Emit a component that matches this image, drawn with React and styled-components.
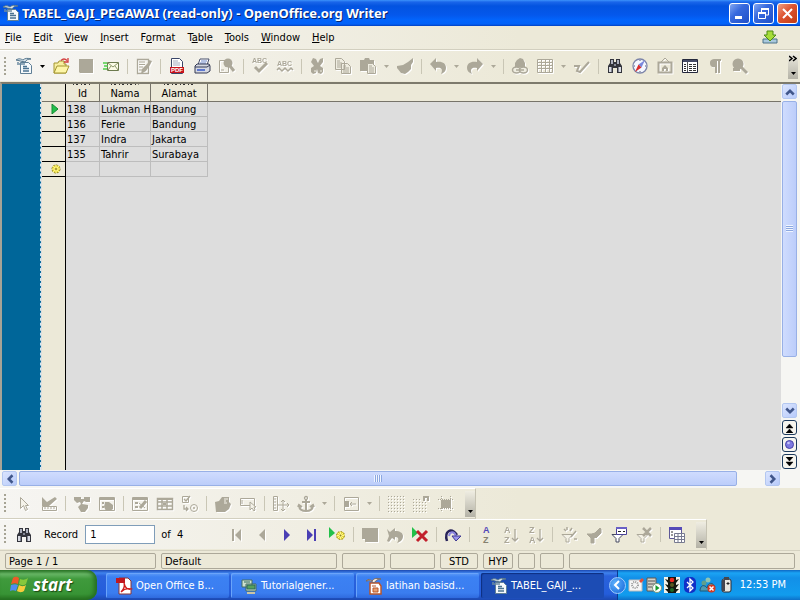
import React from "react";
import styled, { createGlobalStyle, css } from "styled-components";

const G = "#aca899";
const ui = `"DejaVu Sans Condensed", "DejaVu Sans", sans-serif`;

const Global = createGlobalStyle`
  * { box-sizing: border-box; }
  body { margin: 0; background: #ece9d8; font: 11px/14px ${ui}; color: #000; }
  button, input { font: inherit; color: inherit; }
  button { padding: 0; border: 0; background: none; }
  svg { display: block; flex: none; }
`;

/* ---------- icons, each on a 16 x 16 grid ---------- */
const binoculars = (
  <>
    <path d="M3 1h4v3h2V1h4v4l2 3v7h-5v-5H6v5H1V8l2-3z" fill="#33343c" />
    <path d="M4 2h2v4H4zM10 2h2v4h-2z" fill="#aeb2c0" />
    <path d="M2 9h2v5H2zM12 9h2v5h-2z" fill="#d8dae2" />
    <path d="M4 9h1v5H4zM11 9h1v5h-1zM7 6h2v2H7z" fill="#848896" />
  </>
);
const writerDoc = (
  <>
    <path d="M4.500 4.500h8l3 3v8h-11z" fill="#f7fafc" stroke="#5f7f96" />
    <path d="M0 2c3-2 5-1 7 0 2-2 5-2 8-1-3 0-5 1-6 3-3-1-6-1-9-2z" fill="#dfe9ef" stroke="#55758c" />
    <path d="M3 6h6M2 4v3" stroke="#6d8ca2" strokeWidth="1.500" />
    <path d="M7 8.500h4M7 10.500h6M7 13h6" stroke="#4b7391" strokeWidth="1.300" />
  </>
);
const sparkle = (x, y) => (
  <g transform={`translate(${x} ${y})`}>
    <circle r="4" fill="#e8da3c" stroke="#8f8220" strokeDasharray="2 1" />
    <path d="M-4 0h8M0-4v8M-3-3l6 6M-3 3l6-6" stroke="#fff68c" />
    <circle r="1" fill="#8f8220" />
  </g>
);
const funnel = <path d="M1 7h11L8 11v5H5v-5z" fill={G} stroke={G} />;
const funnelOpen = <path d="M1 7.500h11L8 11.500V15H5v-3.500z" fill="#f3f1e6" stroke={G} />;
const smallGrid = <path d="M.5 1.500h15v13H.5zM.5 4.500h15M.5 7.500h15M.5 10.500h15M4.500 1.500v13M8.500 1.500v13M12.500 1.500v13" fill="none" stroke={G} />;
const letter = (x, y, t, fill, size = 9) => (
  <text x={x} y={y} fill={fill} fontFamily="Liberation Sans, sans-serif" fontWeight="700" fontSize={size}>{t}</text>
);

const icons = {
  writer: writerDoc,
  open: (
    <>
      <path d="M1 15V5h4l1-2h5v3h2v9z" fill="#f7efa0" stroke="#a49631" />
      <path d="M1 15l3-7h12l-3 7z" fill="#fdf6a8" stroke="#a49631" />
      <path d="M8 2.500c2-2 4-2 6 0M15 0v4h-4" fill="none" stroke="#d23c3c" strokeWidth="1.300" />
    </>
  ),
  save: <path d="M1 1h14v14H2l-1-1z" fill={G} />,
  mail: (
    <>
      <path d="M4.500 4.500h11v8h-11z" fill="#fbfbe6" stroke="#6c7a4e" />
      <path d="M5 5l5 4 5-4M5 12l3-4M15 12l-3-4" fill="none" stroke="#8b9668" />
      <path d="M0 5h4M1 8h4M0 11h4" stroke="#4fd048" strokeWidth="1.300" />
    </>
  ),
  editDoc: (
    <>
      <path d="M1.500 1.500h11v14h-11z" fill="none" stroke={G} strokeWidth="1.300" />
      <path d="M3 4h6M3 6.500h6M3 9h4M3 12h3" stroke={G} />
      <path d="M13 2l3 1-2 4-4 6-5 3 1-5 6-6z" fill={G} />
    </>
  ),
  pdf: (
    <>
      <path d="M2.500.5h8l3 3v12h-11z" fill="#fff" stroke="#3a4668" />
      <path d="M4 3h5M4 5h7M4 7h7" stroke="#a3aac0" />
      <path d="M1 9h14v6H1z" fill="#c8141e" />
      {letter(2, 14, "PDF", "#fff", 6)}
    </>
  ),
  print: (
    <>
      <path d="M4 7l2-6h9l-2 6z" fill="#fff" stroke="#49506c" />
      <path d="M7 3h6M6 5h6" stroke="#6a85c8" />
      <path d="M1 8l2-2h12l1 2v5l-3 2H1z" fill="#d5d8e2" stroke="#343a54" />
      <path d="M1 9h12l3-2" stroke="#343a54" fill="none" />
      <path d="M3 11h8v2H3z" fill="#5d78d0" />
    </>
  ),
  preview: (
    <>
      <path d="M.5 2.500h9v12h-9z" fill="none" stroke={G} />
      <circle cx="9" cy="5" r="4.500" fill={G} /><path d="M11 8l4 5" stroke={G} strokeWidth="3" /><path d="M2 12h3" stroke={G} />
    </>
  ),
  spell: <>{letter(0, 5, "ABC", G, 7)}<path d="M3 9l4 4 8-8" stroke={G} strokeWidth="3" fill="none" /></>,
  autospell: <>{letter(0, 8, "ABC", G, 7)}<path d="M0 12l2-2 3 3 3-3 3 3 3-3 2 2" stroke={G} strokeWidth="1.500" fill="none" /></>,
  cut: (
    <>
      <path d="M3 0l3 1 2 4 2-4 3-1v4l-3 4 3 2v4l-2 2-3-1-1-4-1 4-3 1-2-2v-4l3-2-3-4z" fill={G} />
      <path d="M5 12v2M11 12v2" stroke="#f1efe3" />
    </>
  ),
  copy: (
    <>
      <path d="M.5.5h6l3 3v8h-9zM6.500 5.500h6l3 3v7h-9z" fill="#efede1" stroke={G} />
      <path d="M2 3h3M2 5h5M2 7h4M2 9h4M8 8h3M8 10h6M8 12h6M8 14h6" stroke={G} />
    </>
  ),
  paste: (
    <>
      <path d="M0 2h4l1-2h4l1 2h4v11H0z" fill={G} />
      <path d="M7.500 5.500h5l3 3v7h-8z" fill="#efede1" stroke={G} />
      <path d="M9 8h3M9 10h5M9 12h5M9 14h5" stroke={G} />
    </>
  ),
  brush: <path d="M16 0v4l-2 3v4l-3 3-3 2-4-1-4-5V8l6-1 5-3z" fill={G} />,
  undo: <path d="M0 6l6-6v4c6-1 10 1 10 6 0 3-2 5-5 6 2-4 1-7-5-6v3z" fill={G} />,
  redo: <path d="M16 6l-6-6v4C4 3 0 5 0 10c0 3 2 5 5 6-2-4-1-7 5-6v3z" fill={G} />,
  link: (
    <>
      <path d="M5 2l3-2 3 1 2 4v4H3V5z" fill={G} />
      <ellipse cx="4.500" cy="12" rx="4" ry="3" fill="#efede1" stroke={G} strokeWidth="1.500" />
      <ellipse cx="11.500" cy="12" rx="4" ry="3" fill="#efede1" stroke={G} strokeWidth="1.500" />
      <path d="M4 12h8" stroke={G} strokeWidth="1.500" />
    </>
  ),
  table: smallGrid,
  draw: <path d="M0 8h5l-2 5 3 1 9-10" stroke={G} strokeWidth="2" fill="none" />,
  find: binoculars,
  navigator: (
    <>
      <circle cx="8" cy="8" r="7" fill="#f4f7ff" stroke="#7c84a8" strokeWidth="1.300" />
      <path d="M13 2L9.500 9.500 6.500 6.500z" fill="#7a88dc" /><path d="M3 14l3.500-7.500 3 3z" fill="#d92a2a" />
      <path d="M8 2v1M8 13v1M2 8h1M13 8h1" stroke="#555b78" />
    </>
  ),
  gallery: (
    <>
      <path d="M4 4l4-4 4 4" fill="none" stroke={G} /><path d="M1.500 4.500h13v10h-13z" fill="none" stroke={G} strokeWidth="2" />
      <path d="M5 10l3-3 3 3v3H9v-2H7v2H5z" fill={G} />
    </>
  ),
  sources: (
    <>
      <path d="M.5 1.500h15v13H.5z" fill="#fff" stroke="#24283c" /><path d="M1 2h14v2H1z" fill="#454b66" />
      <path d="M5.500 4v10" stroke="#555" />
      <path d="M2 6.500h2M2 8.500h2M2 10.500h2M2 12.500h2M7 6.500h3M7 8.500h3M7 10.500h3M7 12.500h3M11 6.500h3M11 8.500h3M11 10.500h3M11 12.500h3" stroke="#333" />
    </>
  ),
  pilcrow: <path d="M14 1v2h-1v12h-2V3h-1v12H8V9C4 10 3 7 3 5c0-3 2-4 5-4z" fill={G} />,
  zoom: <><circle cx="6" cy="6" r="5.500" fill={G} /><path d="M9 9l6 6" stroke={G} strokeWidth="3" /><path d="M1 10h7v3H1z" fill={G} /></>,
  pointer: <path d="M4.500 1.500v11l3-3 2 5 2-1-2-4h3z" fill="#f5f3ea" stroke={G} />,
  design: <><path d="M1 1l5 5 8-5 2 2-8 7H1z" fill={G} /><path d="M1.500 10.500h14v4h-14zM4 11v2M7 11v2M10 11v2M13 11v2" fill="none" stroke={G} /></>,
  control: <path d="M0 1h7v2h3V1h6v5h-4l-2-1-2 3 6 1v3l-3 4H7l-3-5 3-3-1-2-3 1-3-3z" fill={G} />,
  form: <><path d="M.5 1.500h15v13H.5z" fill="none" stroke={G} /><path d="M1 1h14v3H1zM3 6h2v2H3zM3 10h2v2H3zM6 6h4l4 3v4l-3 2H7L5 11z" fill={G} /></>,
  formNav: <><path d="M.5 1.500h15v13H.5z" fill="none" stroke={G} /><path d="M1 1h14v3H1zM3 6h3v2H3zM3 10h3v2H3z" fill={G} /><path d="M14 5l-6 7" stroke={G} strokeWidth="3" /><path d="M7 7l6 5" stroke={G} /></>,
  addField: <><path d="M.5 2.500h15v11H.5zM1 6h14M1 10h14M5 3v11M10 3v11" fill="none" stroke={G} strokeWidth="1.500" /><path d="M1 2h14v2H1zM6 7h3v2H6z" fill={G} /></>,
  order: <><path d="M.5.5h6v6h-6z" fill="none" stroke={G} /><path d="M2 3l2 2 4-5M2 9v4h4M4 11l2 2-2 2" fill="none" stroke={G} strokeWidth="1.300" /><circle cx="12" cy="12" r="3.500" fill="none" stroke={G} /><circle cx="12" cy="12" r="1" fill={G} /></>,
  designOpen: <><path d="M0 6l4-1 3-4h7v5l2 2-2 5-4 3H1z" fill={G} /><path d="M9 3h4M9 5h2M9 7h3" stroke="#f4f2e8" /></>,
  autoFocus: <><path d="M.5 2.500h14v7H.5z" fill="none" stroke={G} /><path d="M2 4v4" stroke={G} /><path d="M10 6v8l2-2 2 3 1-1-1-3h2z" fill="#f4f2e8" stroke={G} /></>,
  position: <><path d="M.5.5h4v14h-4zM1 3h2M1 6h2M1 9h2M1 12h2M5 9h11M10 4v11M8 6l2-2 2 2M8 13l2 2 2-2M14 7l2 2-2 2" fill="none" stroke={G} /></>,
  anchor: <><circle cx="8" cy="2" r="1.500" fill="none" stroke={G} strokeWidth="1.300" /><path d="M8 4v11M4 6h8M1 9c0 4 3 6 7 6s7-2 7-6M0 11l1-2 3 2M16 11l-1-2-3 2" fill="none" stroke={G} strokeWidth="2" /></>,
  align: <><path d="M1.500 1.500h14v13h-14z" fill="none" stroke={G} /><path d="M1 5h5v6H1z" fill={G} /><path d="M7 8h6M9 6L7 8l2 2" stroke={G} fill="none" /></>,
  dots: <path d="M0 .5h16M0 3.500h16M0 6.500h16M0 9.500h16M0 12.500h16M0 15.500h16" stroke={G} strokeDasharray="1 2" />,
  snap: <><path d="M0 3.500h9M0 6.500h14M0 9.500h14M0 12.500h14M0 15.500h14" stroke={G} strokeDasharray="1 2" /><path d="M11 5V1h4v4" stroke={G} strokeWidth="2" fill="none" /></>,
  guides: <><path d="M3 4h10v8H3z" fill={G} /><path d="M0 3.500h16M0 12.500h16M3.500 0v16M12.500 0v16" stroke={G} strokeDasharray="1 1" /></>,
  first: <path d="M3 2h2v12H3zM12 2v12L6 8z" fill={G} />,
  prev: <path d="M11 2v12L5 8z" fill={G} />,
  next: <path d="M5 2v12l6-6z" fill="#4a3fb4" />,
  last: <path d="M3 2v12l6-6zM10 2h2v12h-2z" fill="#4a3fb4" />,
  newRec: <><path d="M0 0v11l6-5z" fill="#22c04a" />{sparkle(11.500, 8.500)}</>,
  saveRec: <path d="M0 1h16v14H3v-3H0z" fill={G} />,
  undoRec: <path d="M0 2l3 3 5-4v3c5 0 8 2 8 5 0 4-3 6-6 7 2-3 2-6-2-6v3L5 11l-3 4-2-1 2-5z" fill={G} />,
  delRec: <><path d="M0 0v11l6-5z" fill="#22c04a" /><path d="M5 4l10 10M15 4L5 14" stroke="#c2202c" strokeWidth="3" /></>,
  refresh: <><path d="M2 14C-1 4 6 0 12 8" fill="none" stroke="#28235a" strokeWidth="2.500" /><path d="M4 9C5 4 9 4 11 9" fill="none" stroke="#8c86e0" strokeWidth="2" /><path d="M7 9h9l-5 5z" fill="#9b95ec" stroke="#3e3892" /></>,
  sort: <>{letter(5, 6, "A", "#5147b8")}{letter(5, 16, "Z", "#85816f")}</>,
  sortAsc: <>{letter(1, 6, "A", G)}{letter(1, 16, "Z", G)}<path d="M12 2v12M9 11l3 3 3-3" stroke={G} fill="none" strokeWidth="1.300" /></>,
  sortDesc: <>{letter(1, 6, "Z", G)}{letter(1, 16, "A", G)}<path d="M12 2v12M9 11l3 3 3-3" stroke={G} fill="none" strokeWidth="1.300" /></>,
  autofilter: <>{funnelOpen}<path d="M3 2l2 2M6 0v3M11 1L9 4M10 10l5-6M13 12h3" stroke={G} strokeWidth="1.500" /></>,
  applyFilter: <>{funnel}<path d="M6 7l3-1 5-5 1 1v4l-5 5z" fill={G} stroke={G} /></>,
  defaultFilter: <><path d="M1 7.500h11L8 11.500V15H5v-3.500z" fill="#fff" stroke="#464a60" /><path d="M5.500.5h10v7h-10z" fill="#fff" stroke="#4a4298" /><path d="M5 0h11v2H5z" fill="#6960c6" /><path d="M7 4.500h3M12 4.500h2" stroke="#222" /></>,
  removeFilter: <>{funnelOpen}<path d="M7 1l8 8M15 1L7 9" stroke={G} strokeWidth="2.500" /></>,
  dataTable: <><path d="M.5.500h12v11H.5z" fill="#fff" stroke="#5d5896" /><path d="M0 0h13v3H0z" fill="#554bb8" /><path d="M2 5h2M2 8h2" stroke="#333" /><path d="M5.500 6.500h10v9h-10zM5 9.500h11M5 12.500h11M9 7v9M12.500 7v9" fill="#fff" stroke="#777a90" /></>,
  update: <><path d="M1 9h14v4H1z" fill="#a9c9dd" stroke="#4d7289" /><path d="M5 1h6v4h3l-6 6-6-6h3z" fill="#a6dc3a" stroke="#4c8a14" /></>,
  acrobat: <><path d="M3 0h9l3 3v13H3z" fill="#fff" stroke="#8c3434" /><path d="M0 0h9v5H0z" fill="#c01820" /><path d="M5 14c3-3 4-6 3-9 1 5 4 7 7 6-4-1-7 0-10 3z" fill="none" stroke="#d01c1c" strokeWidth="1.300" /></>,
  globe: <><path d="M1 2h10v7H1zM5 6h10v7H5z" fill="#cfe2cf" stroke="#456d62" /><path d="M3 4h6M6 7h8v4H6z" fill="#56a05c" stroke="#2c695c" /><path d="M6 15h8" stroke="#c9c4a5" strokeWidth="2" /></>,
  impress: <><path d="M4 5h9l2 3v8H4z" fill="#fff" stroke="#b9562a" strokeWidth="1.500" /><path d="M0 3c3-3 5-1 6 0 2-3 5-3 9-2-3 0-5 1-7 4C6 3 4 2 0 3z" fill="#f8ede2" stroke="#7d6a60" /><path d="M6 8h4M7 10h5v4H7z" fill="#e8a070" stroke="#b9562a" /></>,
  card: <><path d="M1 3h13v11H1z" fill="#f6f6f6" stroke="#bbb" /><circle cx="7" cy="8" r="3" fill="none" stroke="#999" strokeDasharray="1 1" strokeWidth="2" /><path d="M11 4l3-3 2 2-3 3z" fill="#e15038" /></>,
  server: <><path d="M1 1h9v13H1z" fill="#d5d2c8" stroke="#5c5a54" /><path d="M2 4h7M2 7h7M2 10h4" stroke="#555" /><circle cx="11" cy="11" r="4.500" fill="#fff" stroke="#7a9a7a" /><path d="M9.500 8v6l4-3z" fill="#169a2c" /></>,
  traffic: <><path d="M0 0h16v16H0z" fill="#f2f2ea" /><path d="M4 0h8v16H4zM1 2l3 1v3zM15 2l-3 1v3zM1 7l3 1v3zM15 7l-3 1v3zM1 12l3 0v3zM15 12l-3 0v3z" fill="#15180f" /><circle cx="8" cy="3" r="2.300" fill="#ee2a20" /><circle cx="8" cy="8" r="2" fill="#5a5a20" /><circle cx="8" cy="13" r="2" fill="#1e6a28" /></>,
  bluetooth: <><rect x="2" y="0" width="12" height="16" rx="5" fill="#1030c8" /><path d="M5 5l6 6-3 3V2l3 3-6 6" fill="none" stroke="#fff" strokeWidth="1.300" /></>,
  people: <><circle cx="8" cy="3" r="2.500" fill="#8fc6b4" /><circle cx="4" cy="6" r="2.500" fill="#5fa08e" /><path d="M0 13c1-6 5-5 7-2 1-6 6-6 8-1l-3 4H0z" fill="#4f9ab0" stroke="#1d5878" /><circle cx="11.500" cy="11.500" r="4" fill="#d8381e" /><path d="M9.500 9.500l4 4M13.500 9.500l-4 4" stroke="#fff" strokeWidth="1.500" /></>,
  battery: <><rect x="4" y="2" width="9" height="13" rx="2" fill="#e8e8e0" stroke="#2c2c34" /><path d="M6 0h5v3H6zM4 3h3v11H4z" fill="#44464e" /><path d="M8.500 6.500h3M10 5v3" stroke="#222" /></>,
};
const disabled = new Set("save editDoc preview spell autospell cut copy paste brush undo redo link table draw gallery pilcrow zoom pointer design control form formNav addField order designOpen autoFocus position anchor align dots snap guides first prev saveRec undoRec sortAsc sortDesc autofilter applyFilter removeFilter".split(" "));

const Svg = styled.svg`
  overflow: visible;
  ${(p) => p.$dim && css`filter: drop-shadow(1px 1px 0 #fff);`}
`;
const Icon = ({ name, size = 16 }) => (
  <Svg width={size} height={size} viewBox="0 0 16 16" $dim={disabled.has(name)} aria-hidden="true">
    {icons[name]}
  </Svg>
);
const Chevron = ({ dir }) => {
  const d = { up: "M1 6l3-3 3 3", down: "M1 2l3 3 3-3", left: "M6 1L3 4l3 3", right: "M2 1l3 3-3 3" }[dir];
  return <svg width="10" height="10" viewBox="0 0 8 8" aria-hidden="true"><path d={d} fill="none" stroke="#40568a" strokeWidth="2" /></svg>;
};

/* ---------- window frame ---------- */
const Page = styled.div`
  display: flex; flex-direction: column; height: 100vh; min-height: 400px; overflow: hidden;
  background: linear-gradient(90deg, #f6f5f2, #ece9d8 65%);
`;
const TitleBar = styled.header`
  display: flex; align-items: center; gap: 3px; height: 26px; padding: 0 2px 0 3px; flex: none;
  background: linear-gradient(#3c93fb 0, #1a66ea 2px, #0353e0 6px, #0458ec 15px, #0264fc 20px, #0262f8 24px, #0340c0 26px);
`;
const Title = styled.h1`
  flex: 1; margin: 0; font: 700 13px/18px "Noto Sans", sans-serif; color: #fff; white-space: nowrap;
  text-shadow: 1px 1px 0 #08246c;
`;
const FrameButton = styled.button`
  display: grid; place-items: center; width: 21px; height: 21px; border: 1px solid #fff; border-radius: 3px;
  background: ${(p) => (p.$close ? "linear-gradient(135deg, #f0a083, #dd5330 45%, #c13c14)" : "linear-gradient(135deg, #82a7f2, #3769de 40%, #1f4fc8)")};
`;
const FrameButtons = styled.div`display: flex; gap: 3px;`;
const MenuBar = styled.nav`
  display: flex; align-items: center; gap: 12px; height: 24px; padding: 1px 22px 0 5px; flex: none; border-bottom: 1px solid #d2cfbf;
`;
const MenuItem = styled.button`
  line-height: 16px;
  &:last-child { margin-left: auto; }
`;
const Toolbar = styled.div`
  display: flex; align-items: center; height: ${(p) => (p.$tall ? 32 : 31)}px; padding-right: ${(p) => (p.$tall ? 2 : 0)}px; flex: none;
  border-top: 1px solid #fff; border-bottom: 1px solid #d2cfbf;
  ${(p) => p.$fit && css`align-self: flex-start; border-right: 1px solid #c5c2b2;`}
  ${(p) => p.$last && css`border-bottom-color: #ece9d8;`}
`;
const Grip = styled.span`
  width: 2px; height: 19px; margin: 0 5px 0 4px; flex: none;
  background: repeating-linear-gradient(#a6a394 0 2px, transparent 2px 4px);
`;
const Tool = styled.button`
  display: grid; place-items: center; width: 25px; height: 25px; flex: none;
`;
const DropTool = styled(Tool)`width: 12px;`;
const Sep = styled.span`
  width: 1px; height: 15px; margin: 0 3px 0 4px; flex: none; background: #c9c6b5;
`;
const Overflow = styled.button`
  display: flex; flex-direction: column; align-items: center; justify-content: space-between;
  width: 10px; height: 26px; padding: 2px 0 4px; flex: none; align-self: center;
  margin-left: ${(p) => (p.$end ? "auto" : "7px")};
  background: linear-gradient(#efede2, #b4b2a6);
`;
const Down = ({ color = "#000" }) => <svg width="5" height="3" viewBox="0 0 5 3" aria-hidden="true"><path d="M0 0h5L2.500 3z" fill={color} /></svg>;

const Tools = ({ items }) =>
  items.map((it, i) => {
    if (it === "|") return <Sep key={i} />;
    if (it[0] === "v") return <DropTool key={i} aria-label="More options"><Down color={it === "v!" ? "#000" : G} /></DropTool>;
    return <Tool key={i} aria-label={it}><Icon name={it} /></Tool>;
  });

/* ---------- document area ---------- */
const Work = styled.main`
  display: flex; flex: 1; min-height: 0; border-top: 2px solid #7d7a6c; border-left: 2px solid #a6a396; background: #ddd;
`;
const Margin = styled.div`
  width: 39px; flex: none; background: #006699; border-right: 1px dashed #d4e6ee;
`;
const Sheet = styled.div`
  flex: 1; min-width: 0; margin-left: 1px;
  background: linear-gradient(90deg, #ece9d8 23px, #000 23px 24px, #ddd 24px);
`;
const Grid = styled.table`
  width: 100%; table-layout: fixed; border-collapse: separate; border-spacing: 0; line-height: 13px;
`;
const Head = styled.th`
  height: 18px; padding: 2px 0 0; font-weight: 400; background: #ece9d8; border-bottom: 1px solid #77746a;
  border-right: ${(p) => (p.$end ? "0" : p.$row ? "1px solid #000" : "1px solid #77746a")};
  ${(p) => p.$cut && css`background: #ece9d8 repeating-linear-gradient(90deg, #333 0 1px, transparent 1px 3px, #333 3px 5px, transparent 5px 8px) no-repeat center top / 55% 1px;`}
`;
const RowHead = styled.th`
  height: 15px; padding: 0 0 0 9px; border-right: 1px solid #000; border-bottom: 1px solid #000; background: #ece9d8;
`;
const Cell = styled.td`
  height: 15px; padding: 1px 0 0 1px; white-space: nowrap; border-right: 1px solid #bdbdbd; border-bottom: 1px solid #bdbdbd;
`;
const Col = styled.col`width: ${(p) => p.$w}px;`;

const ScrollV = styled.div`
  display: flex; flex-direction: column; gap: 2px; width: 19px; padding: 0 3px 1px 1px; flex: none; background: #f6f6f3;
`;
const ScrollH = styled.div`
  display: flex; gap: 2px; height: 18px; padding: 1px 20px 2px 2px; flex: none; background: #f6f6f3;
`;
const ScrollButton = styled.button`
  display: grid; place-items: center; width: 15px; height: 15px; flex: none; border: 1px solid #b3c7f0; border-radius: 2px;
  background: linear-gradient(135deg, #dbe5fe, #b7cafa);
`;
const Thumb = styled.div`
  display: grid; place-items: center; flex: ${(p) => p.$grow} 1 0; border: 1px solid #98b0e6; border-radius: 2px;
  background: linear-gradient(${(p) => (p.$v ? "90deg" : "180deg")}, #cfdcfe, #bccdfa);
  &::after {
    content: ""; width: ${(p) => (p.$v ? 7 : 8)}px; height: 7px;
    background: repeating-linear-gradient(${(p) => (p.$v ? "180deg" : "90deg")}, #f0f5ff 0 1px, #8ca8e0 1px 2px);
  }
`;
const Track = styled.div`flex: ${(p) => p.$grow} 1 0;`;
const NavButton = styled.button`
  display: grid; place-items: center; width: 15px; height: 15px; flex: none; border: 1px solid #1c3a5c; border-radius: 3px; background: #f6f5ee;
`;

/* ---------- record bar and status ---------- */
const RecordLabel = styled.label`margin: 0 7px 0 8px; white-space: nowrap;`;
const RecordInput = styled.input`
  width: 70px; height: 19px; padding: 0 4px; border: 1px solid #7f9db9; background: #fff; border-radius: 0;
`;
const Count = styled.span`width: 69px; padding-left: 6px; white-space: pre;`;
const Status = styled.footer`
  display: flex; gap: 5px; height: 20px; padding: 2px 5px 1px; flex: none; background: #ece9d8; border-top: 1px solid #d4d1c0;
`;
const StatusCell = styled.span`
  height: 16px; padding: 0 3px; border: 1px solid #aca899; border-radius: 2px; line-height: 16px; white-space: nowrap;
  ${(p) => (p.$w ? css`width: ${p.$w}px;` : css`flex: 1;`)}
  text-align: ${(p) => (p.$mid ? "center" : "left")};
`;

/* ---------- taskbar ---------- */
const Taskbar = styled.footer`
  display: flex; align-items: stretch; height: 30px; flex: none;
  background: linear-gradient(#1c48b0 0, #3f83ee 3px, #2a62dc 6px, #245ddb 24px, #1c48b0 30px);
`;
const Start = styled.button`
  display: flex; align-items: center; gap: 4px; width: 97px; padding-left: 10px; margin-right: 9px; border-radius: 0 10px 10px 0; flex: none;
  font: italic 700 17px/24px "Open Sans", sans-serif; color: #fff; text-shadow: 1px 1px 1px #1a4a12;
  background: linear-gradient(#2f7a2b 0, #67b565 4px, #3f9a3c 9px, #389435 24px, #25701f 30px);
  box-shadow: inset -3px 0 4px #256e22;
`;
const Tasks = styled.div`display: flex; gap: 2px; flex: 498 1 0; max-width: 498px; min-width: 0; padding: 3px 0 2px;`;
const Task = styled.button`
  display: flex; align-items: center; gap: 4px; flex: 1; min-width: 0; padding-left: 10px; border-radius: 2px; color: #fff; white-space: nowrap; overflow: hidden;
  background: ${(p) => (p.$active ? "#1c4cb4" : "linear-gradient(#5d9bf8, #3c81f3 4px, #3a7df0 20px, #2f6ade)")};
  box-shadow: ${(p) => (p.$active ? "inset 1px 1px 1px #0e2f80" : "inset 1px 1px 0 #6aa4fa")};
`;
const Tray = styled.div`
  display: flex; align-items: center; gap: 2px; margin-left: auto; padding-right: 14px; flex: none; color: #fff;
  background: linear-gradient(#0e68c4 0, #1ba4f4 3px, #1290e8 8px, #119cee 25px, #0d70c8 30px);
  border-left: 1px solid #0c3c90;
`;
const TrayArrow = styled.button`
  display: grid; place-items: center; width: 17px; height: 17px; margin-left: -9px; border-radius: 50%; border: 1px solid #9fcdfc;
  background: radial-gradient(circle at 35% 35%, #5cb0fc, #1464d8);
`;
const Clock = styled.time`margin-left: 4px; white-space: nowrap;`;

const menus = ["File", "Edit", "View", "Insert", "Format", "Table", "Tools", "Window", "Help"];
const underlineAt = { Format: 1, Table: 1 };
const rows = [
  ["138", "Lukman H", "Bandung"],
  ["136", "Ferie", "Bandung"],
  ["137", "Indra", "Jakarta"],
  ["135", "Tahrir", "Surabaya"],
];
const standardTools = "writer v! open save mail | editDoc | pdf print preview | spell autospell | cut copy paste v brush | undo v redo v | link table v draw | find navigator gallery sources pilcrow zoom".split(" ");
const designTools = "pointer design | control form | formNav addField order | designOpen autoFocus | position anchor v | align v | dots snap guides".split(" ");
const recordTools = "first prev next last newRec | saveRec undoRec delRec | refresh | sort sortAsc sortDesc | autofilter applyFilter defaultFilter removeFilter | dataTable".split(" ");
const tasks = [
  ["acrobat", "Open Office B..."],
  ["globe", "Tutorialgener..."],
  ["impress", "latihan basisd..."],
  ["writer", "TABEL_GAJI_..."],
];

const MenuLabel = ({ text }) => {
  const n = underlineAt[text] || 0;
  return <>{text.slice(0, n)}<u>{text[n]}</u>{text.slice(n + 1)}</>;
};
const DoubleArrow = ({ down }) => (
  <svg width="9" height="10" viewBox="0 0 9 10" aria-hidden="true">
    <path d={down ? "M1 0h7L4.500 4zM1 5h7L4.500 9z" : "M1 5h7L4.500 1zM1 10h7L4.500 6z"} fill="#000" stroke="#000" strokeWidth=".5" />
  </svg>
);

export default function App() {
  return (
    <Page>
      <Global />
      <TitleBar>
        <Icon name="writer" />
        <Title>TABEL_GAJI_PEGAWAI (read-only) - OpenOffice.org Writer</Title>
        <FrameButtons>
          <FrameButton aria-label="Minimize"><svg width="13" height="13"><path d="M2 9h7v3H2z" fill="#fff" /></svg></FrameButton>
          <FrameButton aria-label="Restore">
            <svg width="13" height="13"><path d="M4.500 5V2h7v6H9M1.500 5.500h7v6h-7z" fill="none" stroke="#fff" /><path d="M4 2h8M1 6h8" stroke="#fff" strokeWidth="2" /></svg>
          </FrameButton>
          <FrameButton $close aria-label="Close"><svg width="13" height="13"><path d="M2 2l9 9M11 2l-9 9" stroke="#fff" strokeWidth="2" /></svg></FrameButton>
        </FrameButtons>
      </TitleBar>
      <MenuBar>
        {menus.map((m) => <MenuItem key={m}><MenuLabel text={m} /></MenuItem>)}
        <MenuItem aria-label="Download update"><Icon name="update" /></MenuItem>
      </MenuBar>
      <Toolbar $tall $last>
        <Grip />
        <Tools items={standardTools} />
        <Overflow $end aria-label="More tools">
          <svg width="8" height="7"><path d="M0 1l3 2.500L0 6M4 1l3 2.500L4 6" fill="none" stroke="#000" strokeWidth="1.500" /></svg>
          <Down />
        </Overflow>
      </Toolbar>
      <Work>
        <Margin />
        <Sheet>
          <Grid>
            <colgroup><Col $w={24} /><Col $w={34} /><Col $w={51} /><Col $w={57} /><col /></colgroup>
            <thead>
              <tr><Head $row /><Head $cut>Id</Head><Head $cut>Nama</Head><Head $cut>Alamat</Head><Head $end /></tr>
            </thead>
            <tbody>
              {rows.map((r, i) => (
                <tr key={r[0]}>
                  <RowHead>{i === 0 && <svg width="8" height="10"><path d="M1 0v10l6-5z" fill="#22c04a" stroke="#168a34" /></svg>}</RowHead>
                  {r.map((c, j) => <Cell key={j}>{c}</Cell>)}
                </tr>
              ))}
              <tr>
                <RowHead><svg width="10" height="10" viewBox="0 0 10 10">{sparkle(5, 5)}</svg></RowHead>
                <Cell /><Cell /><Cell />
              </tr>
            </tbody>
          </Grid>
        </Sheet>
        <ScrollV>
          <ScrollButton aria-label="Scroll up"><Chevron dir="up" /></ScrollButton>
          <Thumb $v $grow={257} />
          <Track $grow={43} />
          <ScrollButton aria-label="Scroll down"><Chevron dir="down" /></ScrollButton>
          <NavButton aria-label="Previous page"><DoubleArrow /></NavButton>
          <NavButton aria-label="Navigation"><svg width="9" height="9"><circle cx="4.500" cy="4.500" r="4" fill="#7e7ae0" stroke="#4844a8" /><circle cx="3.500" cy="3" r="1.300" fill="#c8c6fa" /></svg></NavButton>
          <NavButton aria-label="Next page"><DoubleArrow down /></NavButton>
        </ScrollV>
      </Work>
      <ScrollH>
        <ScrollButton aria-label="Scroll left"><Chevron dir="left" /></ScrollButton>
        <Thumb $grow={718} />
        <Track $grow={24} />
        <ScrollButton aria-label="Scroll right"><Chevron dir="right" /></ScrollButton>
      </ScrollH>
      <Toolbar $fit>
        <Grip />
        <Tools items={designTools} />
        <Overflow aria-label="More form tools"><span /><Down /></Overflow>
      </Toolbar>
      <Toolbar $fit $last>
        <Grip />
        <Tool aria-label="Find record"><Icon name="find" /></Tool>
        <RecordLabel htmlFor="record">Record</RecordLabel>
        <RecordInput id="record" defaultValue="1" />
        <Count>of  4</Count>
        <Tools items={recordTools} />
        <Overflow aria-label="More record tools"><span /><Down /></Overflow>
      </Toolbar>
      <Status>
        <StatusCell $w={151}>Page 1 / 1</StatusCell>
        <StatusCell $w={176}>Default</StatusCell>
        <StatusCell $w={43} />
        <StatusCell $w={45} />
        <StatusCell $w={38} $mid>STD</StatusCell>
        <StatusCell $w={30} $mid>HYP</StatusCell>
        <StatusCell $w={17} />
        <StatusCell $w={24} />
        <StatusCell />
      </Status>
      <Taskbar>
        <Start>
          <svg width="19" height="18" viewBox="0 0 19 18" aria-hidden="true">
            <path d="M3 2c3-2 4-1 6 0L8 8C6 7 4 7 1 8z" fill="#ee5a28" />
            <path d="M10 3c3 1 5 1 8-1l-2 6c-3 2-5 1-7 0z" fill="#86c83c" />
            <path d="M1 9c3-1 5-1 7 0l-2 6c-2-1-4-1-6 0z" fill="#4f8cf0" />
            <path d="M9 9c2 1 4 2 7 0l-2 6c-3 2-5 1-7 0z" fill="#f8cc3c" />
          </svg>
          start
        </Start>
        <Tasks>
          {tasks.map(([ic, t], i) => <Task key={t} $active={i === 3}><Icon name={ic} />{t}</Task>)}
        </Tasks>
        <Tray>
          <TrayArrow aria-label="Show hidden icons"><svg width="8" height="10"><path d="M6 1L2 5l4 4" fill="none" stroke="#fff" strokeWidth="2" /></svg></TrayArrow>
          {["card", "server", "traffic", "bluetooth", "people", "battery"].map((n) => <Icon key={n} name={n} />)}
          <Clock>12:53 PM</Clock>
        </Tray>
      </Taskbar>
    </Page>
  );
}
